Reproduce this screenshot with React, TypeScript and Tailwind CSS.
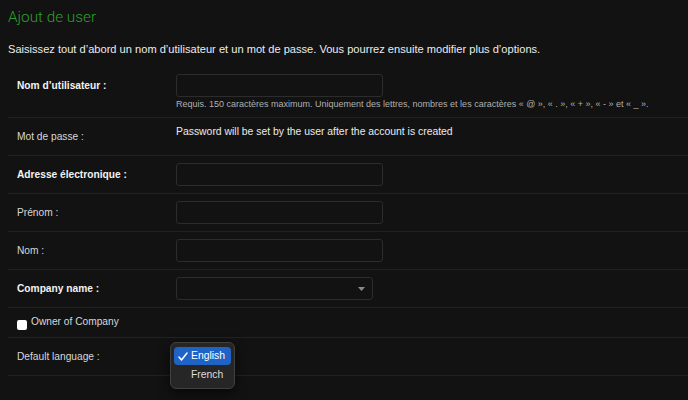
import React from "react";

const font = { fontFamily: '"Liberation Sans", Arial, sans-serif' };

const TextInput = ({ w = "w-[207px]" }: { w?: string }) => (
  <div className={`${w} h-[23px] rounded-[3px] border border-[#2c2c2c] bg-[#121212]`} />
);

type RowProps = {
  label: string;
  bold?: boolean;
  children?: React.ReactNode;
  className?: string;
};

const Row = ({ label, bold, children, className = "" }: RowProps) => (
  <div className={`flex border-b border-[#222] pl-[9px] py-[7px] ${className}`}>
    <div
      className={`w-[159px] shrink-0 h-[23px] flex items-center text-[10.2px] ${
        bold ? "font-bold text-[#f2f2f2]" : "text-[#d8d8d8]"
      }`}
    >
      {label}
    </div>
    <div className="flex flex-col">{children}</div>
  </div>
);

export default function App() {
  return (
    <div className="w-[688px] h-[400px] overflow-hidden bg-[#121212] pl-2 pt-[4px]" style={font}>
      <h1
        className="text-[15.3px] leading-[26px] font-light text-[#2f9e2f]"
        style={{ fontFamily: 'Roboto, "Liberation Sans", sans-serif' }}
      >
        Ajout de user
      </h1>
      <p className="mt-[11px] text-[11.1px] leading-[16px] text-[#ececec]">
        Saisissez tout d’abord un nom d’utilisateur et un mot de passe. Vous pourrez ensuite modifier plus d’options.
      </p>

      <div className="mt-[10px]">
        <Row label="Nom d’utilisateur :" bold className="pb-[6px]">
          <TextInput />
          <div className="mt-[1px] text-[9px] leading-[13px] text-[#b0b0b0]">
            Requis. 150 caractères maximum. Uniquement des lettres, nombres et les caractères « @ », « . », « + », « - » et « _ ».
          </div>
        </Row>
        <Row label="Mot de passe :">
          <div className="text-[10.4px] leading-[13px] text-[#ececec]">
            Password will be set by the user after the account is created
          </div>
        </Row>
        <Row label="Adresse électronique :" bold>
          <TextInput />
        </Row>
        <Row label="Prénom :">
          <TextInput />
        </Row>
        <Row label="Nom :">
          <TextInput />
        </Row>
        <Row label="Company name :" bold>
          <div className="w-[197px] h-[23px] rounded-[3px] border border-[#2c2c2c] bg-[#121212] flex items-center justify-end pr-[7px]">
            <svg width="7" height="4" viewBox="0 0 7 4">
              <path d="M0 0h7L3.5 4z" fill="#8a8a8a" />
            </svg>
          </div>
        </Row>
        <div className="flex items-center gap-[4px] border-b border-[#222] pl-[9px] py-[7px] h-[30px]">
          <span className="mt-[4px] w-[10px] h-[10px] rounded-[2px] bg-white" />
          <span className="-mt-[1px] text-[10.2px] text-[#d8d8d8]">Owner of Company</span>
        </div>
        <div className="relative">
          <Row label="Default language :">
            <div className="h-[23px]" />
          </Row>
          <div className="absolute left-[162px] top-[4px] w-[65px] h-[47px] rounded-[6px] border border-[#404040] bg-[#262626] shadow-[0_4px_12px_rgba(0,0,0,0.6)] px-[3px] pt-[4px]">
            <div className="flex items-center h-[18px] rounded-[4px] bg-[#1f63c6] pl-[4px] text-[10.4px] font-medium text-white">
              <svg width="10" height="9" viewBox="0 0 10 9" className="mr-[3px]">
                <path d="M1 5l2.5 3L9 1" stroke="white" strokeWidth="1.5" fill="none" strokeLinecap="round" strokeLinejoin="round" />
              </svg>
              English
            </div>
            <div className="h-[19px] flex items-center pl-[17px] text-[10.4px] text-[#dcdcdc]">French</div>
          </div>
        </div>
      </div>
    </div>
  );
}
